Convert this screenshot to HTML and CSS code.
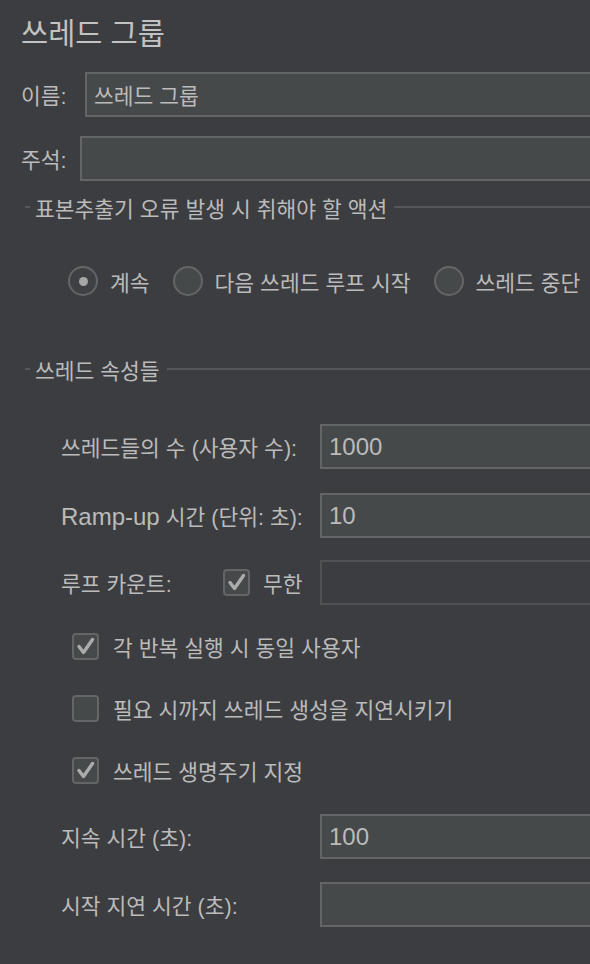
FILE: index.html
```html
<!DOCTYPE html>
<html lang="ko">
<head>
<meta charset="utf-8">
<title>쓰레드 그룹</title>
<link rel="stylesheet" href="styles.css">
</head>
<body>
<div class="page">
  <div class="title">쓰레드 그룹</div>

  <div class="row row-name">
    <label class="lbl lbl-name">이름:</label>
    <div class="input">쓰레드 그룹</div>
  </div>
  <div class="row row-comment">
    <label class="lbl lbl-comment">주석:</label>
    <div class="input"></div>
  </div>

  <div class="section sec-1">
    <span class="dash"></span>
    <span class="sec-text">표본추출기 오류 발생 시 취해야 할 액션</span>
    <span class="sec-line"></span>
  </div>

  <div class="radios">
    <div class="opt"><span class="radio checked"><span class="dot"></span></span><span>계속</span></div>
    <div class="opt"><span class="radio"></span><span>다음 쓰레드 루프 시작</span></div>
    <div class="opt"><span class="radio"></span><span>쓰레드 중단</span></div>
  </div>

  <div class="section sec-2">
    <span class="dash"></span>
    <span class="sec-text">쓰레드 속성들</span>
    <span class="sec-line"></span>
  </div>

  <div class="prop prop-1">
    <span class="plabel">쓰레드들의 수 (사용자 수):</span>
    <div class="input"><span class="lat">1000</span></div>
  </div>
  <div class="prop prop-2">
    <span class="plabel"><span class="lat">Ramp-up</span> 시간 (단위: 초):</span>
    <div class="input"><span class="lat">10</span></div>
  </div>
  <div class="prop prop-3">
    <div class="plabel loop">
      <span class="loop-text">루프 카운트:</span>
      <span class="cbox"><svg viewBox="0 0 27 27" width="27" height="27"><path d="M7 13.5 L11.5 19.5 L20.5 6.5" fill="none" stroke="#ababab" stroke-width="3.4" stroke-linecap="round" stroke-linejoin="round"/></svg></span>
      <span class="inf">무한</span>
    </div>
    <div class="input disabled"></div>
  </div>

  <div class="check check-1">
    <span class="cbox"><svg viewBox="0 0 27 27" width="27" height="27"><path d="M7 13.5 L11.5 19.5 L20.5 6.5" fill="none" stroke="#ababab" stroke-width="3.4" stroke-linecap="round" stroke-linejoin="round"/></svg></span>
    <span>각 반복 실행 시 동일 사용자</span>
  </div>
  <div class="check check-2">
    <span class="cbox"></span>
    <span>필요 시까지 쓰레드 생성을 지연시키기</span>
  </div>
  <div class="check check-3">
    <span class="cbox"><svg viewBox="0 0 27 27" width="27" height="27"><path d="M7 13.5 L11.5 19.5 L20.5 6.5" fill="none" stroke="#ababab" stroke-width="3.4" stroke-linecap="round" stroke-linejoin="round"/></svg></span>
    <span>쓰레드 생명주기 지정</span>
  </div>

  <div class="prop prop-4">
    <span class="plabel">지속 시간 (초):</span>
    <div class="input"><span class="lat">100</span></div>
  </div>
  <div class="prop prop-5">
    <span class="plabel">시작 지연 시간 (초):</span>
    <div class="input"></div>
  </div>
</div>
</body>
</html>
```

FILE: styles.css
```css
html, body {
  margin: 0;
  padding: 0;
}
body {
  width: 590px;
  height: 964px;
  overflow: hidden;
  background: #3c3d40;
  color: #bbbbbb;
  font-family: "Liberation Sans", "Noto Sans CJK KR", sans-serif;
  font-size: 21.5px;
}
.page {
  width: 640px;
  padding-top: 14px;
}
.lat {
  font-size: 24px;
}
.title {
  font-size: 29.5px;
  line-height: 40px;
  height: 40px;
  padding-left: 21px;
  color: #c2c2c2;
}
.row {
  display: flex;
  align-items: center;
  height: 45px;
  padding-left: 21px;
}
.row-name { margin-top: 18px; }
.row-comment { margin-top: 19px; }
.lbl { flex: none; }
.lbl-name { width: 64px; }
.lbl-comment { width: 59px; }
.input {
  flex: 1;
  box-sizing: border-box;
  height: 45px;
  border: 2px solid #646566;
  background: #45494a;
  padding-left: 7px;
  display: flex;
  align-items: center;
  color: #bbbbbb;
}
.input.disabled {
  background: #3c3d40;
  border-color: #505153;
}
.section {
  display: flex;
  align-items: center;
  height: 24px;
  padding-left: 25px;
}
.sec-1 { margin-top: 14px; }
.sec-2 { margin-top: 61px; }
.dash {
  width: 5px;
  height: 2px;
  background: #56575a;
  margin-right: 5px;
}
.sec-text { flex: none; }
.sec-line {
  flex: 1;
  height: 2px;
  background: #56575a;
  margin-left: 7px;
}
.radios {
  display: flex;
  align-items: center;
  height: 30px;
  margin-top: 47px;
  padding-left: 68px;
  gap: 23px;
}
.opt {
  display: flex;
  align-items: center;
  gap: 12px;
}
.radio {
  box-sizing: border-box;
  width: 30px;
  height: 30px;
  border-radius: 50%;
  border: 2px solid #646566;
  background: #45494a;
  display: flex;
  align-items: center;
  justify-content: center;
}
.radio.checked { background: #3e4043; }
.dot {
  width: 9px;
  height: 9px;
  border-radius: 50%;
  background: #a6a6a6;
}
.prop {
  display: flex;
  align-items: center;
  height: 45px;
  padding-left: 61px;
}
.plabel {
  flex: none;
  width: 259px;
}
.prop-1 { margin-top: 43px; }
.prop-2 { margin-top: 24px; }
.prop-3 { margin-top: 22px; }
.prop-4 { margin-top: 29px; }
.prop-5 { margin-top: 23px; }
.loop {
  display: flex;
  align-items: center;
}
.loop-text { width: 162px; }
.inf { margin-left: 13px; }
.cbox {
  box-sizing: border-box;
  flex: none;
  width: 27px;
  height: 27px;
  border: 2px solid #646566;
  border-radius: 4px;
  background: #45494a;
  display: flex;
  align-items: center;
  justify-content: center;
  overflow: hidden;
}
.cbox svg { flex: none; }
.check {
  display: flex;
  align-items: center;
  height: 30px;
  padding-left: 72px;
  gap: 14px;
}
.check-1 { margin-top: 26px; }
.check-2 { margin-top: 32px; }
.check-3 { margin-top: 32px; }
```
